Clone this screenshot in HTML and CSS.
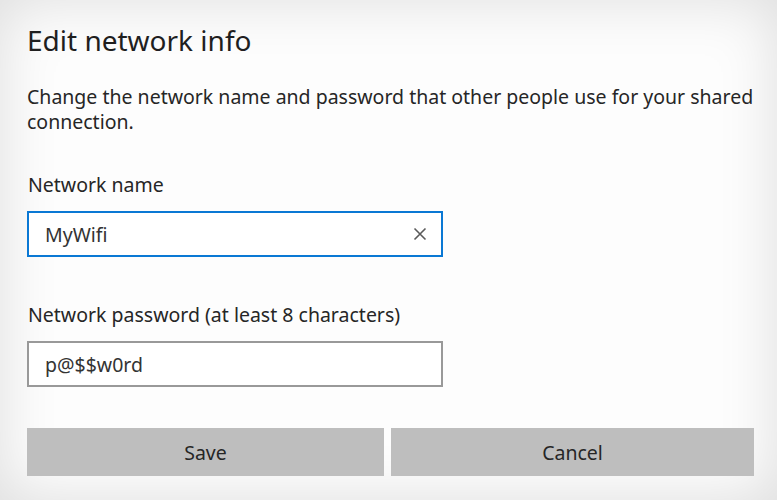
FILE: index.html
```html
<!DOCTYPE html>
<html>
<head>
<meta charset="utf-8">
<link rel="stylesheet" href="styles.css">
</head>
<body>
<div class="screen">
  <div class="dialog">
    <h1 class="title">Edit network info</h1>
    <p class="desc">Change the network name and password that other people use for your shared connection.</p>
    <div class="field field-name">
      <label class="label">Network name</label>
      <div class="input focused">
        <span class="value">MyWifi</span>
        <svg class="clear" width="14" height="14" viewBox="0 0 14 14"><path d="M1.5 1.5 L12.5 12.5 M12.5 1.5 L1.5 12.5" stroke="#5a5a5a" stroke-width="1.6" fill="none"/></svg>
      </div>
    </div>
    <div class="field field-pass">
      <label class="label">Network password (at least 8 characters)</label>
      <div class="input">
        <span class="value">p@$$w0rd</span>
      </div>
    </div>
    <div class="buttons">
      <button class="btn save">Save</button>
      <button class="btn cancel">Cancel</button>
    </div>
  </div>
</div>
</body>
</html>
```
FILE: styles.css
```css
html, body {
  margin: 0;
  padding: 0;
}
body {
  width: 777px;
  height: 500px;
  overflow: hidden;
  font-family: "Noto Sans", "Open Sans", sans-serif;
  color: #262626;
}
.screen {
  width: 777px;
  height: 500px;
  box-sizing: border-box;
  background: #fdfdfd;
  box-shadow: inset 0 0 60px rgba(0, 0, 0, 0.13);
}
.dialog {
  padding: 22px 0 0 27px;
}
.title {
  margin: 0;
  font-size: 28px;
  font-weight: 400;
  line-height: 36px;
  color: #1f1f1f;
}
.desc {
  margin: 26px 0 0 0;
  font-size: 19.5px;
  line-height: 25px;
  width: 735px;
}
.field-name {
  margin-top: 39px;
}
.field-pass {
  margin-top: 46px;
}
.label {
  display: block;
  font-size: 19.5px;
  line-height: 24px;
  margin-left: 1px;
}
.input {
  box-sizing: border-box;
  width: 416px;
  height: 46px;
  margin-top: 14px;
  border: 2px solid #999;
  background: #fff;
  display: flex;
  align-items: center;
  justify-content: space-between;
  padding: 0 14px 0 16px;
}
.input.focused {
  border-color: #0a78d4;
}
.value {
  font-size: 19.5px;
  color: #333;
}
.clear {
  display: block;
}
.buttons {
  display: flex;
  gap: 7px;
  margin-top: 41px;
  width: 727px;
}
.btn {
  flex: 1 1 0;
  height: 48px;
  border: none;
  background: #bebebe;
  font-family: "Noto Sans", "Open Sans", sans-serif;
  font-size: 19.5px;
  color: #262626;
  padding: 0;
}
.btn.save {
  flex: 0 0 357px;
}
```
